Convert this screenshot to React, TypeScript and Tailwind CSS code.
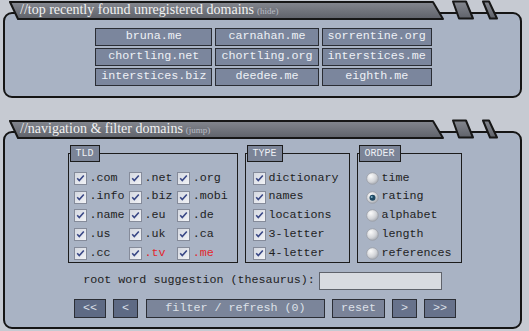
const mono = "font-['Liberation_Mono','Courier_New',monospace]";
const serif = "font-['Liberation_Serif','Times_New_Roman',serif]";

const domains = [
  "bruna.me", "carnahan.me", "sorrentine.org",
  "chortling.net", "chortling.org", "interstices.me",
  "interstices.biz", "deedee.me", "eighth.me",
];

const tlds = [
  ".com", ".net", ".org",
  ".info", ".biz", ".mobi",
  ".name", ".eu", ".de",
  ".us", ".uk", ".ca",
  ".cc", ".tv", ".me",
];

function TabShape() {
  return (
    <svg className="absolute left-0 top-0" width="519" height="21" viewBox="0 0 519 21">
      <defs>
        <linearGradient id="tabg" x1="0" y1="0" x2="0" y2="1">
          <stop offset="0" stopColor="#84878f" />
          <stop offset="1" stopColor="#5f626a" />
        </linearGradient>
      </defs>
      <path d="M7 2 L430 2 L440 19 L15 19 Z" fill="url(#tabg)" stroke="#171717" strokeWidth="2" strokeLinejoin="round" />
      <path d="M450 1.5 L463 1.5 L470 18.5 L456 18.5 Z" fill="url(#tabg)" stroke="#171717" strokeWidth="2" strokeLinejoin="round" />
      <path d="M480 1.5 L486 1.5 L494 18.5 L487 18.5 Z" fill="url(#tabg)" stroke="#171717" strokeWidth="2" strokeLinejoin="round" />
    </svg>
  );
}

function Section(props: { title: string; small: string; children: React.ReactNode }) {
  return (
    <div className="relative ml-[3px] w-[519px]">
      <div className="relative z-10 h-[20px]">
        <TabShape />
        <div className={`relative pl-[17px] pt-[1px] leading-[18px] text-[#f2f2f2] ${serif}`}>
          <span className="text-[14px]">{props.title}</span>{" "}
          <span className="text-[9px] text-[#b9bdc5]">{props.small}</span>
        </div>
      </div>
      <div className="-mt-[8px] rounded-[9px] border-2 border-[#151515] bg-[#a9b3c4]">{props.children}</div>
    </div>
  );
}

function Check() {
  return (
    <svg width="13" height="13" viewBox="0 0 13 13" className="shrink-0">
      <defs>
        <linearGradient id="cbg" x1="0" y1="0" x2="1" y2="1">
          <stop offset="0" stopColor="#d3d7e0" />
          <stop offset="1" stopColor="#f3f4f7" />
        </linearGradient>
      </defs>
      <rect x="0.5" y="0.5" width="12" height="12" fill="url(#cbg)" stroke="#858b9a" />
      <path d="M3.2 6.2 L5.3 8.6 L9.8 3.4" fill="none" stroke="#3a4886" strokeWidth="1.6" />
    </svg>
  );
}

function Radio(props: { on?: boolean }) {
  return (
    <svg width="13" height="13" viewBox="0 0 13 13" className="shrink-0">
      <defs>
        <radialGradient id="rdg" cx="0.35" cy="0.3" r="0.8">
          <stop offset="0" stopColor="#fbfbfb" />
          <stop offset="0.6" stopColor="#d2d4d8" />
          <stop offset="1" stopColor="#9ea2aa" />
        </radialGradient>
      </defs>
      <circle cx="6.5" cy="6.5" r="5.8" fill="url(#rdg)" stroke="#9a9ea6" strokeWidth="0.8" />
      {props.on && <circle cx="6.5" cy="6.8" r="3" fill="#1f4a64" />}
      {props.on && <circle cx="5.7" cy="5.9" r="1" fill="#7fb0c8" />}
    </svg>
  );
}

function Box(props: { label: string; w: string; children: React.ReactNode }) {
  return (
    <div className={`${props.w} mt-[8px] h-[110px] border border-[#1c1c1c]`}>
      <div className={`-mt-[9px] ml-[1px] h-[17px] w-fit border border-[#1c1c1c] bg-[#7b8497] px-[5px] text-[10px] leading-[15px] text-[#eef0f4] ${mono}`}>
        {props.label}
      </div>
      <div className="mt-[7px]">{props.children}</div>
    </div>
  );
}

function Btn(props: { label: string; w: string; bg: string }) {
  return (
    <div className={`${props.w} ${props.bg} flex h-[19px] items-center justify-center border border-[#2b2e35] text-[#dde1e8]`}>
      {props.label}
    </div>
  );
}

export default function App() {
  return (
    <div className={`h-[331px] w-[529px] overflow-hidden bg-[#c6cad2] text-[11.7px] ${mono}`}>
      <Section title="//top recently found unregistered domains" small="(hide)">
        <div className="pt-[14px] pb-[10px]">
          <div className="mx-auto grid w-fit grid-cols-[auto_auto_auto] gap-x-[3px] gap-y-[2px] pl-[2px]">
            {domains.map((d) => (
              <div key={d} className="flex h-[18px] items-center justify-center border border-[#2a2d34] bg-[#7b869d] px-[5px] text-[#eef1f6]">
                {d}
              </div>
            ))}
          </div>
        </div>
      </Section>

      <div className="mt-[21px]">
        <Section title="//navigation & filter domains" small="(jump)">
          <div className="pt-[12px] pb-[9px] text-[#1e1e1e]">
            <div className="flex justify-center gap-[7px] pl-[4px]">
              <Box label="TLD" w="w-[170px]">
                <div className="grid w-fit grid-cols-[auto_auto_auto] gap-x-[4px] pl-[5px]">
                  {tlds.map((t) => (
                    <div key={t} className="flex h-[18.75px] items-center gap-[3px]">
                      <Check />
                      <span className={t === ".tv" || t === ".me" ? "text-[#e2262c]" : ""}>{t}</span>
                    </div>
                  ))}
                </div>
              </Box>
              <Box label="TYPE" w="w-[105px]">
                <div className="pl-[7px]">
                  {["dictionary", "names", "locations", "3-letter", "4-letter"].map((t) => (
                    <div key={t} className="flex h-[18.75px] items-center gap-[3px]">
                      <Check />
                      <span>{t}</span>
                    </div>
                  ))}
                </div>
              </Box>
              <Box label="ORDER" w="w-[105px]">
                <div className="pl-[8px]">
                  {["time", "rating", "alphabet", "length", "references"].map((t) => (
                    <div key={t} className="flex h-[18.75px] items-center gap-[3px]">
                      <Radio on={t === "rating"} />
                      <span>{t}</span>
                    </div>
                  ))}
                </div>
              </Box>
            </div>

            <div className="mt-[9px] flex items-center justify-center gap-[4px]">
              <span>root word suggestion (thesaurus):</span>
              <div className="h-[18px] w-[123px] border border-[#5f636b] bg-[#d8dbe0]" />
            </div>

            <div className="mt-[9px] flex justify-center gap-[7px] pl-[5px]">
              <Btn label="<<" w="w-[32px]" bg="bg-[#5e6a84]" />
              <Btn label="<" w="w-[25px]" bg="bg-[#5e6a84]" />
              <Btn label="filter / refresh (0)" w="w-[179px] ml-[1px]" bg="bg-[#7b859a]" />
              <Btn label="reset" w="w-[53px]" bg="bg-[#7a8398]" />
              <Btn label=">" w="w-[25px]" bg="bg-[#67728b]" />
              <Btn label=">>" w="w-[32px]" bg="bg-[#67728b]" />
            </div>
          </div>
        </Section>
      </div>
    </div>
  );
}
